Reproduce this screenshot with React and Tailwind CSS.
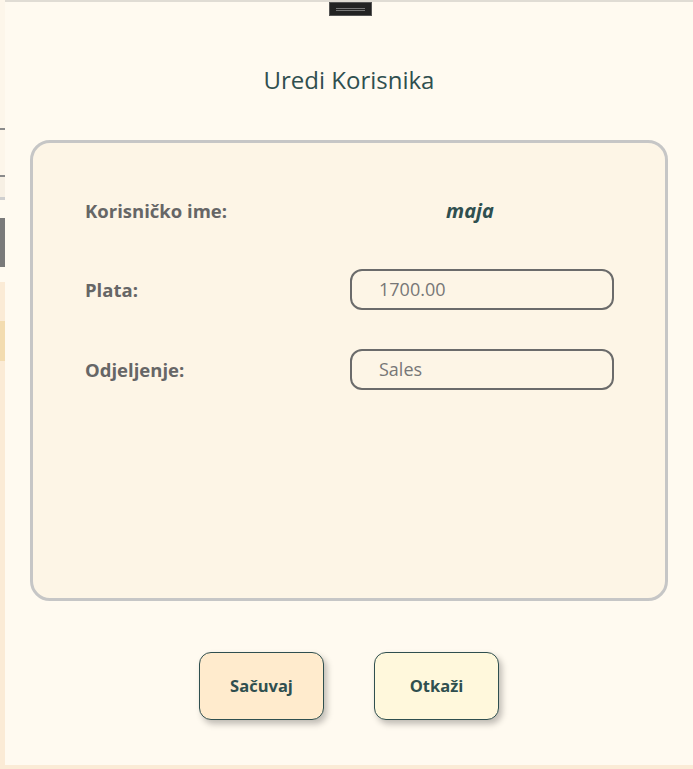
import React from 'react'

const App = () => {
    return (
        <div
            className="flex h-[769px] w-[693px] overflow-hidden bg-[#fbebd6]"
            style={{ fontFamily: '"Open Sans", "Noto Sans", sans-serif' }}
        >
            {/* page behind the modal */}
            <div className="flex w-[5px] shrink-0 flex-col">
                <div className="h-[128px] bg-[#fdf6ea]"></div>
                <div className="h-[2px] bg-[#8a8a8a]"></div>
                <div className="h-[45px] bg-[#fdf6ea]"></div>
                <div className="h-[2px] bg-[#8a8a8a]"></div>
                <div className="h-[20px] bg-[#f7f0e4]"></div>
                <div className="h-[3px] bg-[#cfcfcf]"></div>
                <div className="h-[18px] bg-[#fffaf0]"></div>
                <div className="h-[49px] bg-[#7a7a7a]"></div>
                <div className="h-[15px] bg-[#fffaf0]"></div>
                <div className="h-[39px] bg-[#fbebd6]"></div>
                <div className="h-[40px] bg-[#f3dcb0]"></div>
                <div className="flex-1 bg-[#fbebd6]"></div>
            </div>

            <div className="flex h-[765px] flex-1 flex-col border-t-2 border-[#e0dcd4] bg-[#fffaf0]">
                <div className="flex justify-center pl-[3px]">
                    <div className="flex h-[14px] w-[43px] flex-col justify-center gap-[1px] border border-[#555] bg-[#222] px-[6px]">
                        <div className="h-px bg-[#777]"></div>
                        <div className="h-px bg-[#777]"></div>
                    </div>
                </div>

                <h2 className="mt-[48px] text-center text-[24px] leading-[32px] text-[#2f4f4f]">
                    Uredi Korisnika
                </h2>

                <div className="mx-[25px] mt-[44px] flex h-[461px] flex-col rounded-[20px] border-[3px] border-[#c6c6c6] bg-[#fdf5e6] pl-[52px] pr-[51px] pt-[56px]">
                    <div className="flex h-[24px] items-center justify-between">
                        <span className="text-[18.5px] font-bold text-[#666]">Korisničko ime:</span>
                        <span className="w-[264px] pr-[24px] text-center text-[20px] font-bold italic text-[#2f4f4f]">maja</span>
                    </div>
                    <div className="mt-[46px] flex h-[41px] items-center justify-between">
                        <span className="text-[18.5px] font-bold text-[#666]">Plata:</span>
                        <div className="flex h-[41px] w-[264px] items-center rounded-[12px] border-2 border-[#6b6b6b] pl-[27px] text-[18px] text-[#777]">
                            1700.00
                        </div>
                    </div>
                    <div className="mt-[39px] flex h-[41px] items-center justify-between">
                        <span className="text-[18.5px] font-bold text-[#666]">Odjeljenje:</span>
                        <div className="flex h-[41px] w-[264px] items-center rounded-[12px] border-2 border-[#6b6b6b] pl-[27px] text-[18px] text-[#777]">
                            Sales
                        </div>
                    </div>
                </div>

                <div className="mt-[51px] flex justify-center gap-[50px]">
                    <button className="h-[68px] w-[125px] rounded-[12px] border border-[#2f4f4f] bg-[#ffebcd] text-[16.5px] font-bold text-[#2f4f4f] shadow-[3px_4px_6px_rgba(0,0,0,0.25)]">
                        Sačuvaj
                    </button>
                    <button className="h-[68px] w-[125px] rounded-[12px] border border-[#2f4f4f] bg-[#fff8dc] text-[16.5px] font-bold text-[#2f4f4f] shadow-[3px_4px_6px_rgba(0,0,0,0.25)]">
                        Otkaži
                    </button>
                </div>
            </div>
        </div>
    )
}

export default App
